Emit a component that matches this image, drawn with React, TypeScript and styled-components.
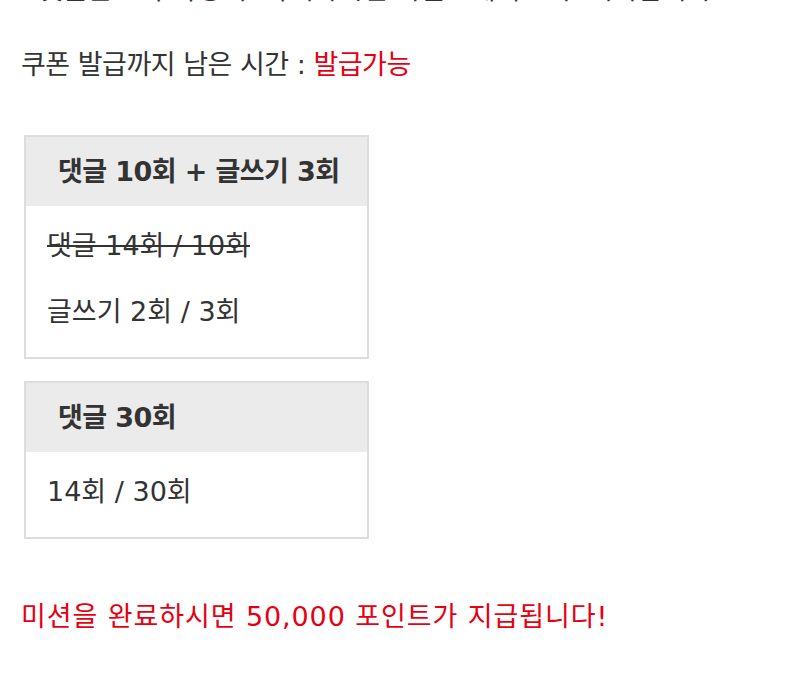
import React from "react";
import styled, { createGlobalStyle } from "styled-components";

const GlobalStyle = createGlobalStyle`
  body {
    margin: 0;
    background: #fff;
    font-family: "DejaVu Sans", "Noto Sans CJK KR", sans-serif;
    color: #333;
    overflow: hidden;
  }
`;

const Page = styled.div`
  padding: 0 21px;
  font-size: 27px;
`;

const Notice = styled.p`
  margin: -28px 0 0;
  line-height: 36px;
  white-space: nowrap;
`;

const Status = styled.p`
  margin: 39px 0 0;
  line-height: 36px;
  letter-spacing: -0.5px;
`;

const Red = styled.span`
  color: #e60012;
`;

const MissionList = styled.div`
  display: flex;
  flex-direction: column;
  gap: 22px;
  margin: 52px 0 0 3px;
  width: 345px;
`;

const Mission = styled.div`
  border: 2px solid #dddddd;
`;

const MissionTitle = styled.div`
  background: #ebebeb;
  padding: 0 32px;
  line-height: 69px;
  font-weight: 700;
  letter-spacing: -0.6px;
  white-space: nowrap;
`;

const MissionBody = styled.div`
  display: flex;
  flex-direction: column;
  gap: 26px;
  padding: 20px 21px 25px;
`;

const Progress = styled.div<{ $done?: boolean }>`
  line-height: 40px;
  text-decoration: ${(p) => (p.$done ? "line-through" : "none")};
`;

const Reward = styled.p`
  margin: 60px 0 0;
  line-height: 36px;
  letter-spacing: 0.9px;
  color: #e60012;
`;

const missions = [
  {
    title: "댓글 10회 + 글쓰기 3회",
    rows: [
      { text: "댓글 14회 / 10회", done: true },
      { text: "글쓰기 2회 / 3회", done: false },
    ],
  },
  {
    title: "댓글 30회",
    rows: [{ text: "14회 / 30회", done: false }],
  },
];

export default function App() {
  return (
    <Page>
      <GlobalStyle />
      <Notice>
        &nbsp;&nbsp;댓글은 1회 작성 후 삭제하시면 카운트에서 모두 제외됩니다.
      </Notice>
      <Status>
        쿠폰 발급까지 남은 시간 : <Red>발급가능</Red>
      </Status>

      <MissionList>
        {missions.map((m) => (
          <Mission key={m.title}>
            <MissionTitle>{m.title}</MissionTitle>
            <MissionBody>
              {m.rows.map((r) => (
                <Progress key={r.text} $done={r.done}>
                  {r.text}
                </Progress>
              ))}
            </MissionBody>
          </Mission>
        ))}
      </MissionList>

      <Reward>미션을 완료하시면 50,000 포인트가 지급됩니다!</Reward>
    </Page>
  );
}
